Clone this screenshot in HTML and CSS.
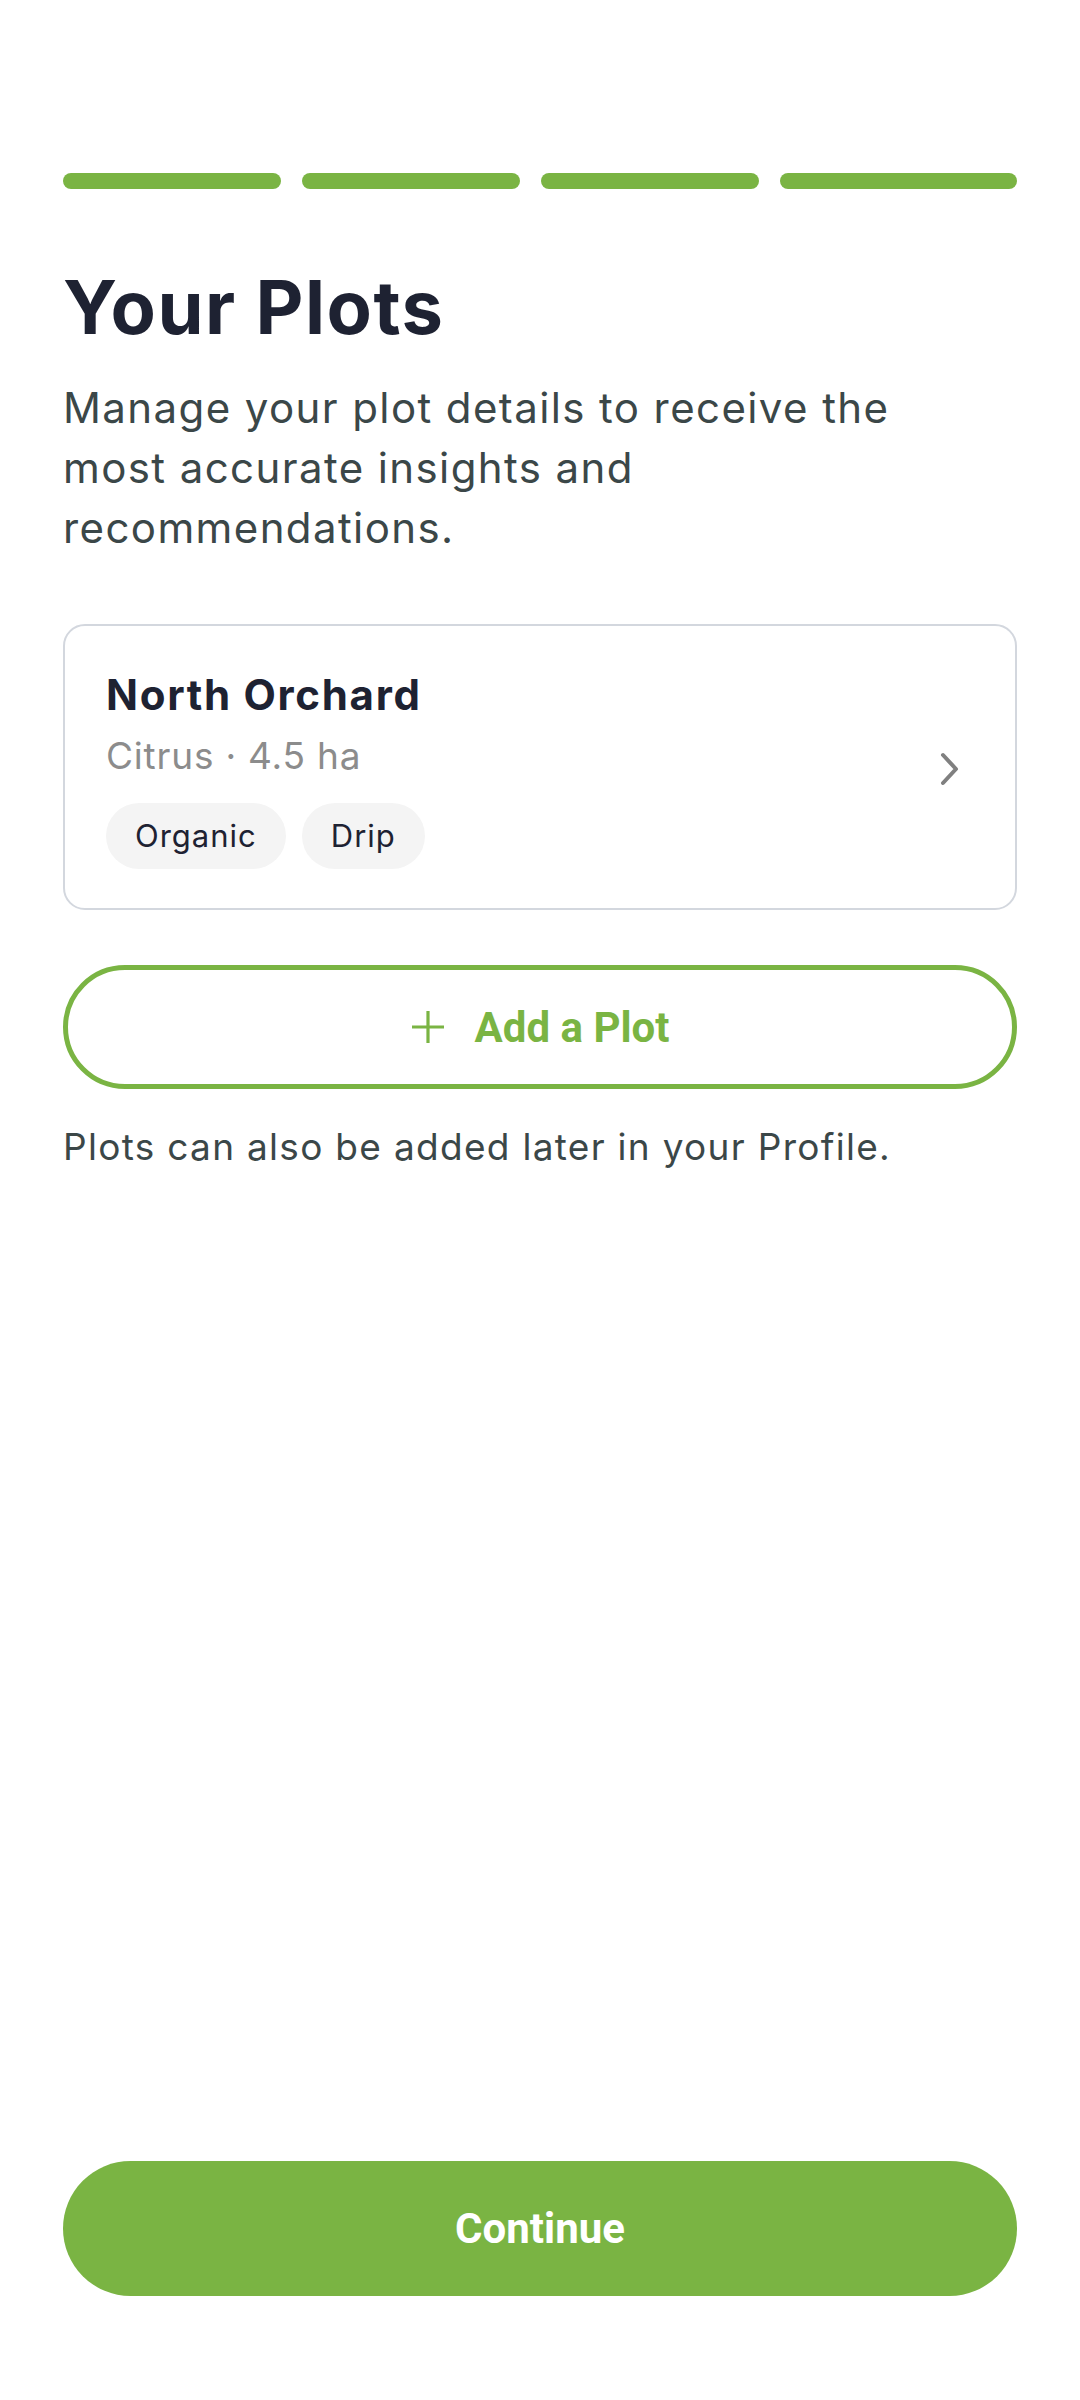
FILE: index.html
```html
<!DOCTYPE html>
<html lang="en">
<head>
<meta charset="utf-8">
<title>Your Plots</title>
<link rel="stylesheet" href="styles.css">
</head>
<body>
<main class="screen">
  <div class="progress">
    <span class="step"></span>
    <span class="step"></span>
    <span class="step"></span>
    <span class="step step-last"></span>
  </div>

  <h1 class="title">Your Plots</h1>
  <p class="lead">Manage your plot details to receive the most accurate insights and recommendations.</p>

  <div class="plot-card">
    <div class="plot-info">
      <div class="plot-name">North Orchard</div>
      <div class="plot-meta">Citrus · 4.5 ha</div>
      <div class="chips">
        <span class="chip">Organic</span>
        <span class="chip">Drip</span>
      </div>
    </div>
    <svg class="chevron" viewBox="0 0 24 36" width="24" height="36" aria-hidden="true">
      <polyline points="5,4 18,18 5,32" fill="none" stroke="#808080" stroke-width="4" stroke-linecap="round" stroke-linejoin="round"/>
    </svg>
  </div>

  <button class="add-btn" type="button">
    <svg class="plus" viewBox="0 0 34 34" width="34" height="34" aria-hidden="true">
      <path d="M17 1 V33 M1 17 H33" stroke="#7ab443" stroke-width="3.2" fill="none"/>
    </svg>
    <span>Add a Plot</span>
  </button>

  <p class="hint">Plots can also be added later in your Profile.</p>

  <button class="continue-btn" type="button">Continue</button>
</main>
</body>
</html>
```

FILE: styles.css
```css
html, body {
  margin: 0;
  padding: 0;
  background: #ffffff;
}

.screen {
  box-sizing: border-box;
  min-height: 2400px;
  padding: 173px 63px 104px;
  display: flex;
  flex-direction: column;
  font-family: "Inter", "Open Sans", sans-serif;
}

.progress {
  display: flex;
  gap: 21px;
}

.step {
  flex: 0 0 218px;
  height: 16px;
  border-radius: 8px;
  background: #7ab443;
}

.step-last {
  flex: 1 1 auto;
}

.title {
  margin: 74px 0 0;
  font-size: 74px;
  line-height: 88px;
  font-weight: 700;
  color: #1e2232;
  letter-spacing: 1.5px;
}

.lead {
  margin: 27px 0 0;
  font-size: 42px;
  line-height: 60px;
  color: #3b4748;
  letter-spacing: 1.4px;
  max-width: 900px;
}

.plot-card {
  margin-top: 66px;
  box-sizing: border-box;
  border: 2px solid #d3d7de;
  border-radius: 22px;
  padding: 43px 53px 39px 41px;
  display: flex;
  align-items: center;
}

.plot-info {
  flex: 1;
}

.plot-name {
  font-size: 42px;
  line-height: 52px;
  font-weight: 700;
  color: #1e2232;
  letter-spacing: 1.7px;
}

.plot-meta {
  margin-top: 11px;
  font-size: 37px;
  line-height: 48px;
  color: #8c8c8c;
  letter-spacing: 0.8px;
}

.chips {
  margin-top: 23px;
  display: flex;
  gap: 16px;
}

.chip {
  height: 66px;
  line-height: 66px;
  padding: 0 29px;
  border-radius: 33px;
  background: #f4f4f4;
  font-size: 31px;
  color: #1e2232;
  letter-spacing: 1px;
}

.chevron {
  flex: none;
}

.add-btn {
  margin-top: 55px;
  height: 124px;
  box-sizing: border-box;
  border: 5px solid #7ab443;
  border-radius: 62px;
  background: #ffffff;
  display: flex;
  align-items: center;
  justify-content: center;
  gap: 30px;
  font-family: "Roboto", sans-serif;
  font-weight: 700;
  font-size: 42px;
  color: #7ab443;
  padding: 0;
}

.plus {
  flex: none;
}

.hint {
  margin: 34px 0 0;
  font-size: 37px;
  line-height: 48px;
  color: #3b4748;
  letter-spacing: 1.3px;
}

.continue-btn {
  margin-top: auto;
  height: 135px;
  border: none;
  border-radius: 68px;
  background: #7ab443;
  color: #ffffff;
  font-family: "Roboto", sans-serif;
  font-weight: 700;
  font-size: 42px;
  padding: 0;
}
```
